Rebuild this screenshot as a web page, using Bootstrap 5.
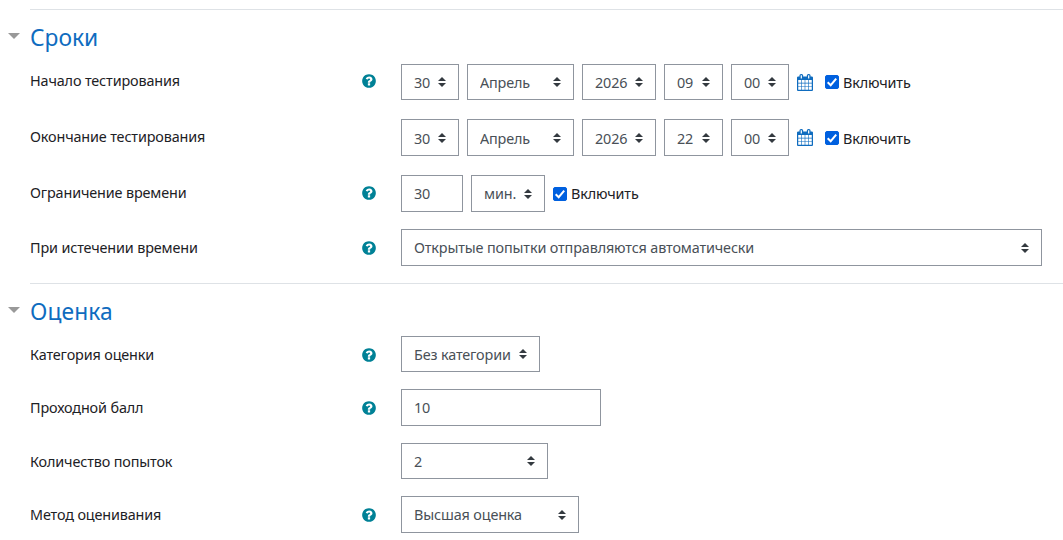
<!DOCTYPE html>
<html lang="ru">
<head>
<meta charset="utf-8">
<meta name="viewport" content="width=device-width, initial-scale=1">
<title>Настройки теста</title>
<link href="https://cdn.jsdelivr.net/npm/bootstrap@5.3.0/dist/css/bootstrap.min.css" rel="stylesheet">
<style>
body { font: 14.4px/22px "Noto Sans", sans-serif; letter-spacing: -.14px; color: #1d2125; background: #fff; overflow: hidden; }
.section { margin-left: 30px; border-top: 1px solid #dee2e6; }
.section-title { font-size: 22.8px; line-height: 28px; letter-spacing: 0; color: #0f6cbf; padding-top: 14px; height: 54px; margin: 0; }
.grades .section-title { height: 52px; letter-spacing: .1px; }
.caret { width: 12px; height: 6px; margin: 9px 10px 0 -22px; background: #999; clip-path: polygon(0 0, 100% 0, 50% 100%); }
.field { height: 37px; margin-bottom: 17px; }
.field.short { height: 36px; }
.field.spaced { margin-bottom: 19px; }
.caption { width: 371px; padding-right: 24px; height: 22px; margin-top: 8px; }
.spaced .caption, .limit .caption { margin-top: 7px; }
.spaced.short .caption { margin-top: 6px; }
.help { width: 16px; height: 16px; fill: #008196; }
.cal { width: 16px; height: 17px; fill: #0f6cbf; margin: 0 12px 0 0; }
.form-select, .form-control { width: auto; height: 100%; font-size: inherit; line-height: 22px; letter-spacing: inherit; color: #495057; border: 1px solid #8f959e; border-radius: 0; padding: 0 12px; background-color: #fff; flex: none; }
.form-select { padding-right: 20px; background-image: url("data:image/svg+xml,%3Csvg xmlns='http://www.w3.org/2000/svg' viewBox='0 0 4 5'%3E%3Cpath fill='%23343a40' d='M2 0L0 2h4zm0 5L0 3h4z'/%3E%3C/svg%3E"); background-size: 8px 10px; background-position: right 12px center; }
.short .form-select, .spaced .form-select, .spaced label span { padding-top: 2px; }
.w58 { width: 58px; } .w59 { width: 59px; } .w62 { width: 62px; } .w74 { width: 74px; } .w107 { width: 107px; }
.w139 { width: 139px; } .w147 { width: 147px; } .w178 { width: 178px; } .w200 { width: 200px; } .w641 { width: 641px; }
.form-check-input[type=checkbox] { width: 14px; height: 14px; margin: 0 4px 0 0; border-radius: 2px; flex: none; }
.form-check-input:checked[type=checkbox] { background-color: #0060df; border-color: #0060df; background-size: 14px 14px; background-image: url("data:image/svg+xml,%3Csvg xmlns='http://www.w3.org/2000/svg' viewBox='0 0 14 14'%3E%3Cpath fill='none' stroke='%23fff' stroke-width='2' d='M2.7 7.2l3 3 5.5-6.6'/%3E%3C/svg%3E"); }
</style>
</head>
<body>
<svg class="d-none">
  <symbol id="help" viewBox="0 0 1792 1792"><path d="M1024 1376v-192q0-14-9-23t-23-9h-192q-14 0-23 9t-9 23v192q0 14 9 23t23 9h192q14 0 23-9t9-23zm256-672q0-88-55.500-163t-138.500-116-170-41q-243 0-371 213-15 24 8 42l132 100q7 6 19 6 16 0 25-12 53-68 86-92 34-24 86-24 48 0 85.500 26t37.500 59q0 38-20 61t-68 45q-63 28-115.500 86.500t-52.500 125.500v36q0 14 9 23t23 9h192q14 0 23-9t9-23q0-19 21.500-49.500t54.500-49.500q32-18 49-28.500t46-35 44.500-48 28-60.500 12.500-81zm384 192q0 209-103 385.500t-279.500 279.500-385.500 103-385.500-103-279.500-279.500-103-385.500 103-385.500 279.500-279.500 385.500-103 385.500 103 279.500 279.500 103 385.500z"/></symbol>
  <symbol id="cal" viewBox="64 0 1664 1792" preserveAspectRatio="none"><path d="M192 1664h288v-288h-288v288zm352 0h320v-288h-320v288zm-352-352h288v-320h-288v320zm352 0h320v-320h-320v320zm-352-384h288v-288h-288v288zm736 736h320v-288h-320v288zm-384-736h320v-288h-320v288zm768 736h288v-288h-288v288zm-384-352h320v-320h-320v320zm-352-864v-288q0-13-9.500-22.500t-22.500-9.500h-64q-13 0-22.500 9.500t-9.500 22.500v288q0 13 9.500 22.500t22.500 9.500h64q13 0 22.500-9.500t9.500-22.500zm736 864h288v-320h-288v320zm-384-384h320v-288h-320v288zm384 0h288v-288h-288v288zm32-480v-288q0-13-9.500-22.500t-22.500-9.500h-64q-13 0-22.500 9.500t-9.500 22.500v288q0 13 9.500 22.500t22.500 9.500h64q13 0 22.500-9.500t9.500-22.500zm384-64v1280q0 52-38 90t-90 38h-1408q-52 0-90-38t-38-90v-1280q0-52 38-90t90-38h128v-96q0-66 47-113t113-47h64q66 0 113 47t47 113v96h384v-96q0-66 47-113t113-47h64q66 0 113 47t47 113v96h128q52 0 90 38t38 90z"/></symbol>
</svg>
<form style="padding-top:9px">
  <section class="section">
    <h3 class="section-title d-flex fw-normal"><span class="caret"></span>Сроки</h3>
    <div class="field short spaced d-flex">
      <div class="caption d-flex flex-shrink-0 justify-content-between align-items-center"><span>Начало тестирования</span><svg class="help"><use href="#help"/></svg></div>
      <div class="d-flex gap-2 align-items-center">
        <select class="form-select w58"><option>30</option></select>
        <select class="form-select w107"><option>Апрель</option></select>
        <select class="form-select w74"><option>2026</option></select>
        <select class="form-select w59"><option>09</option></select>
        <select class="form-select w58"><option>00</option></select>
        <div class="d-flex align-items-center"><svg class="cal"><use href="#cal"/></svg><label class="d-flex align-items-center"><input class="form-check-input" type="checkbox" checked><span>Включить</span></label></div>
      </div>
    </div>
    <div class="field spaced d-flex">
      <div class="caption flex-shrink-0">Окончание тестирования</div>
      <div class="d-flex gap-2 align-items-center">
        <select class="form-select w58"><option>30</option></select>
        <select class="form-select w107"><option>Апрель</option></select>
        <select class="form-select w74"><option>2026</option></select>
        <select class="form-select w59"><option>22</option></select>
        <select class="form-select w58"><option>00</option></select>
        <div class="d-flex align-items-center"><svg class="cal"><use href="#cal"/></svg><label class="d-flex align-items-center"><input class="form-check-input" type="checkbox" checked><span>Включить</span></label></div>
      </div>
    </div>
    <div class="field limit d-flex">
      <div class="caption d-flex flex-shrink-0 justify-content-between align-items-center"><span>Ограничение времени</span><svg class="help"><use href="#help"/></svg></div>
      <div class="d-flex gap-2 align-items-center">
        <input class="form-control w62" type="text" value="30">
        <select class="form-select w74"><option>мин.</option></select>
        <label class="d-flex align-items-center"><input class="form-check-input" type="checkbox" checked><span>Включить</span></label>
      </div>
    </div>
    <div class="field d-flex">
      <div class="caption d-flex flex-shrink-0 justify-content-between align-items-center"><span>При истечении времени</span><svg class="help"><use href="#help"/></svg></div>
      <select class="form-select w641"><option>Открытые попытки отправляются автоматически</option></select>
    </div>
  </section>
  <section class="section grades">
    <h3 class="section-title d-flex fw-normal"><span class="caret"></span>Оценка</h3>
    <div class="field short d-flex">
      <div class="caption d-flex flex-shrink-0 justify-content-between align-items-center"><span>Категория оценки</span><svg class="help"><use href="#help"/></svg></div>
      <select class="form-select w139"><option>Без категории</option></select>
    </div>
    <div class="field d-flex">
      <div class="caption d-flex flex-shrink-0 justify-content-between align-items-center"><span>Проходной балл</span><svg class="help"><use href="#help"/></svg></div>
      <input class="form-control w200" type="text" value="10">
    </div>
    <div class="field short d-flex">
      <div class="caption flex-shrink-0">Количество попыток</div>
      <select class="form-select w147"><option>2</option></select>
    </div>
    <div class="field d-flex">
      <div class="caption d-flex flex-shrink-0 justify-content-between align-items-center"><span>Метод оценивания</span><svg class="help"><use href="#help"/></svg></div>
      <select class="form-select w178"><option>Высшая оценка</option></select>
    </div>
  </section>
</form>
<script src="https://cdn.jsdelivr.net/npm/bootstrap@5.3.0/dist/js/bootstrap.bundle.min.js"></script>
</body>
</html>
